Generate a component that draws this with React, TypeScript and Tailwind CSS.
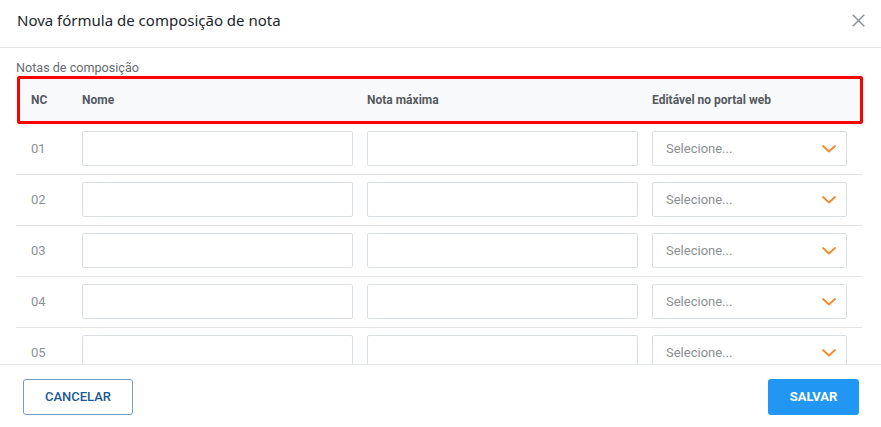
import React from "react";

const rows = ["01", "02", "03", "04", "05"];

function Chevron() {
  return (
    <svg width="14" height="8" viewBox="0 0 14 8" fill="none">
      <polyline points="1,1 7,6.5 13,1" stroke="#f6892a" strokeWidth="1.8" strokeLinecap="round" strokeLinejoin="round" />
    </svg>
  );
}

export default function App() {
  return (
    <div className="w-[881px] h-[427px] bg-white flex flex-col overflow-hidden font-['Roboto',sans-serif]">
      <div className="h-[48px] shrink-0 border-b border-[#e3e5e7] flex items-start justify-between pl-[17px] pr-[16px] pt-[10px]">
        <span className="text-[15px] leading-[20px] text-[#212529] font-['Noto_Sans',sans-serif]">
          Nova fórmula de composição de nota
        </span>
        <svg width="13" height="13" viewBox="0 0 13 13" className="mt-[4px]" fill="none">
          <line x1="0.75" y1="0.75" x2="12.25" y2="12.25" stroke="#8a8f94" strokeWidth="1.4" />
          <line x1="12.25" y1="0.75" x2="0.75" y2="12.25" stroke="#8a8f94" strokeWidth="1.4" />
        </svg>
      </div>
      <div className="flex-1 overflow-hidden px-[16px] pt-[12px]">
        <div className="text-[12.6px] leading-[16px] text-[#666b70]">Notas de composição</div>
        <div className="ml-[1px] w-[846px] h-[48px] border-[3px] border-[#ff0000] rounded-[2px] bg-[#f8f9fa] flex items-center pl-[11px] text-[12px] font-bold text-[#555a5f]">
          <div className="w-[51px]">NC</div>
          <div className="w-[270px]">Nome</div>
          <div className="w-[270px] ml-[15px]">Nota máxima</div>
          <div className="w-[195px] ml-[15px]">Editável no portal web</div>
        </div>
        {rows.map((n) => (
          <div key={n} className="w-[846px] h-[51px] border-b border-[#e1e5e8] flex items-center pl-[15px] pb-[1px]">
            <div className="w-[51px] text-[13px] text-[#8c9196]">{n}</div>
            <div className="w-[271px] h-[35px] border border-[#dadfe3] rounded-[2px] bg-white" />
            <div className="w-[271px] h-[35px] ml-[14px] border border-[#dadfe3] rounded-[2px] bg-white" />
            <div className="w-[195px] h-[35px] ml-[14px] border border-[#dadfe3] rounded-[2px] bg-white flex items-center justify-between pl-[13px] pr-[10px]">
              <span className="text-[13px] text-[#8c8f92]">Selecione...</span>
              <Chevron />
            </div>
          </div>
        ))}
      </div>
      <div className="h-[63px] shrink-0 border-t border-[#e1e5e8] flex items-center justify-between pl-[23px] pr-[22px] pt-[1px]">
        <button className="w-[110px] h-[36px] border border-[#6f9ccc] rounded-[3px] text-[13px] font-medium text-[#1b5a96] bg-white">
          CANCELAR
        </button>
        <button className="w-[91px] h-[36px] rounded-[3px] bg-[#2196f3] text-[13px] font-bold text-white">
          SALVAR
        </button>
      </div>
    </div>
  );
}
